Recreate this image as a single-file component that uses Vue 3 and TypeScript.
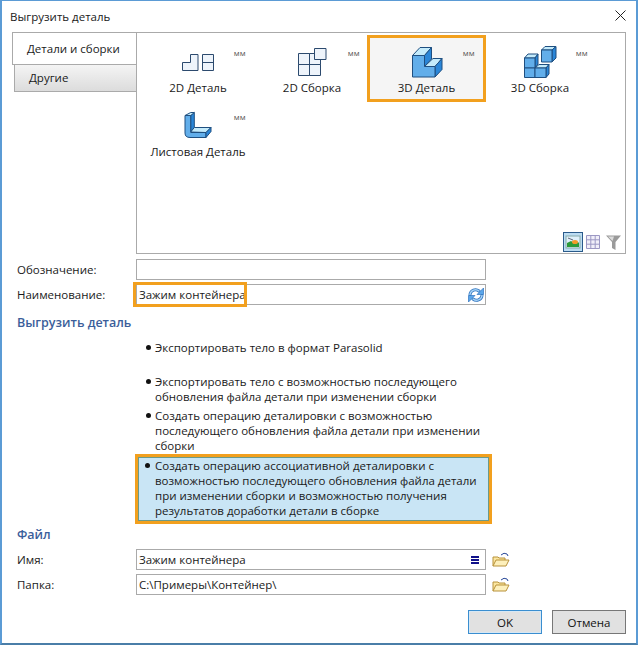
<script setup lang="ts">
interface Item { label: string; icon: string; selected?: boolean }
const items: Item[] = [
  { label: '2D Деталь', icon: 'p2' },
  { label: '2D Сборка', icon: 'a2' },
  { label: '3D Деталь', icon: 'p3', selected: true },
  { label: '3D Сборка', icon: 'a3' },
  { label: 'Листовая Деталь', icon: 'sheet' },
]
const options: { lines: string[]; gap: number; selected?: boolean }[] = [
  { lines: ['Экспортировать тело в формат Parasolid'], gap: 19 },
  { lines: ['Экспортировать тело с возможностью последующего', 'обновления файла детали при изменении сборки'], gap: 4 },
  { lines: ['Создать операцию деталировки с возможностью', 'последующего обновления файла детали при изменении', 'сборки'], gap: 4 },
  { lines: ['Создать операцию ассоциативной деталировки с', 'возможностью последующего обновления файла детали', 'при изменении сборки и возможностью получения', 'результатов доработки детали в сборке'], gap: 0, selected: true },
]
</script>

<template>
  <div class="window">
    <header class="title">
      <span>Выгрузить деталь</span>
      <svg class="close" width="11" height="11" viewBox="0 0 11 11"><path d="M.5.5l10 10M10.500.5l-10 10" stroke="#222" fill="none" /></svg>
    </header>

    <section class="tabs">
      <div class="tab-col">
        <div class="tab active">Детали и сборки</div>
        <div class="tab other">Другие</div>
      </div>
      <div class="pane">
        <div class="grid">
          <div v-for="it in items" :key="it.label" class="item" :class="{ sel: it.selected }">
            <span class="mm">мм</span>
            <svg class="ico" width="40" height="32" viewBox="0 0 40 32">
              <g v-if="it.icon === 'p2'" fill="#eef4fb" stroke="#2c4a6e" stroke-width="1">
                <path d="M4.500 24.500V16.500H12.500V8.500H20V24.500Z" />
                <path d="M24.500 8.500H35.500V24.500H24.500ZM24.500 16.500H35.500" />
              </g>
              <g v-else-if="it.icon === 'a2'" fill="#eef4fb" stroke="#2c4a6e" stroke-width="1">
                <path d="M6.500 7.500h11v11h-11zM6.500 18.500h11v11h-11zM17.500 18.500h11v11h-11zM17.500 7.500h11v11h-11z" />
                <path d="M22.500 2.500h11.500v11h-11.500z" />
              </g>
              <g v-else-if="it.icon === 'p3'" stroke="#1f4f80" stroke-width="1" stroke-linejoin="round">
                <path d="M5.500 9.500L13 1.500H24.500L17.500 9.500Z" fill="#c4ebfb" />
                <path d="M17.500 9.500L24.500 1.500V13L17.500 20.500Z" fill="#2a86d8" />
                <path d="M17.500 20.500L26 12.500H35L28 20.500Z" fill="#c4ebfb" />
                <path d="M28 20.500L35 12.500V23.500L28 31Z" fill="#2a86d8" />
                <path d="M5.500 9.500H17.500V20.500H28V31H5.500Z" fill="#62aeea" />
              </g>
              <g v-else-if="it.icon === 'a3'" stroke="#1f4f80" stroke-width="1" stroke-linejoin="round">
                <path d="M21.500 4L25 .5H36L32 4Z" fill="#c4ebfb" /><path d="M32 4L36 .5V12L32 16Z" fill="#2a86d8" /><path d="M21.500 4H32V16H21.500Z" fill="#62aeea" />
                <path d="M4.500 12L8 8H18L15 12Z" fill="#c4ebfb" /><path d="M15 12L18 8V18L15 22Z" fill="#2a86d8" /><path d="M4.500 12H15V22H4.500Z" fill="#62aeea" />
                <path d="M4.500 22H15V31.500H4.500Z" fill="#62aeea" />
                <path d="M15 22L19 18.500H29L26 22Z" fill="#c4ebfb" /><path d="M26 22L29 18.500V28L26 31.500Z" fill="#2a86d8" /><path d="M15 22H26V31.500H15Z" fill="#62aeea" />
              </g>
              <g v-else stroke="#1f4f80" stroke-width="1" stroke-linejoin="round">
                <path d="M12.700 5.500L16.300 2.500V17.500L12.700 22Z" fill="#2a86d8" />
                <path d="M7 5.500L12.700 2.500H16.300L12.700 5.500Z" fill="#c4ebfb" />
                <path d="M12.700 22L16.300 17.500H33L28 22.500Z" fill="#c4ebfb" />
                <path d="M7 5.500H12.700V22.500H28V27.500H12Q7 27.500 7 23Z" fill="#62aeea" />
                <path d="M28 22.500L33 17.500V21.500L28 27.500Z" fill="#2a86d8" />
              </g>
            </svg>
            <span class="lbl">{{ it.label }}</span>
          </div>
        </div>
        <div class="views">
          <span class="view on">
            <svg width="16" height="14" viewBox="0 0 16 14"><rect x="1" y="1" width="14" height="12" fill="#dff0fa" stroke="#8aa" /><path d="M2 12V8l4-2 3 2 4-1 1 1v4z" fill="#2c9a3a" /><ellipse cx="10" cy="7" rx="3" ry="2" fill="#f39a2a" /><path d="M3 3l5 2" stroke="#667" /></svg>
          </span>
          <svg width="14" height="14" viewBox="0 0 14 14"><path d="M.5.5h13v13H.5zM.5 4.800h13M.5 9.200h13M4.800.5v13M9.200.5v13" fill="#f1eff9" stroke="#9c98c4" /></svg>
          <svg class="funnel" width="15" height="15" viewBox="0 0 15 15"><path d="M0 .5h15L9.500 7v8L6 13V7z" fill="#9a9a9a" /><path d="M2 1.500h6L6.500 6z" fill="#dcdcdc" /></svg>
        </div>
      </div>
    </section>

    <div class="row top">
      <label>Обозначение:</label>
      <div class="field"></div>
    </div>
    <div class="row second">
      <label>Наименование:</label>
      <div class="field">
        <span>Зажим контейнера</span>
        <i class="mark"></i>
        <svg class="sync" width="16" height="16" viewBox="0 0 16 16">
          <g fill="none" stroke-linecap="round">
            <path d="M2 7.500A5.500 5.500 0 0 1 11 4" stroke="#2f74c0" stroke-width="3" />
            <path d="M14 8.500A5.500 5.500 0 0 1 5 12" stroke="#2f74c0" stroke-width="3" />
            <path d="M2 7.500A5.500 5.500 0 0 1 11 4" stroke="#a8d4f6" stroke-width="1.500" />
            <path d="M14 8.500A5.500 5.500 0 0 1 5 12" stroke="#a8d4f6" stroke-width="1.500" />
          </g>
          <path d="M9 7.500H15.500V1Z" fill="#5aa6ea" stroke="#2f74c0" stroke-width=".7" />
          <path d="M7 8.500H.5V15Z" fill="#5aa6ea" stroke="#2f74c0" stroke-width=".7" />
        </svg>
      </div>
    </div>

    <h2 class="h-export">Выгрузить деталь</h2>
    <ul class="opts">
      <li v-for="(o, i) in options" :key="i" :class="{ sel: o.selected }" :style="{ marginBottom: o.gap + 'px' }">
        <span v-for="l in o.lines" :key="l" class="ln">{{ l }}</span>
      </li>
    </ul>

    <h2 class="h-file">Файл</h2>
    <div class="row file first">
      <label>Имя:</label>
      <div class="field">
        <span>Зажим контейнера</span>
        <span class="menu"></span>
      </div>
      <svg class="folder" width="18" height="16" viewBox="0 0 18 16"><path d="M1 14V5h5l1 1h6v2" fill="#fbe6a0" stroke="#b8923a" /><path d="M1 14l3-6h13l-3 6z" fill="#fdf0bc" stroke="#b8923a" /><path d="M9 3q3-3 6-1l1 2" fill="none" stroke="#2a4a9a" /></svg>
    </div>
    <div class="row file">
      <label>Папка:</label>
      <div class="field"><span>C:\Примеры\Контейнер\</span></div>
      <svg class="folder" width="18" height="16" viewBox="0 0 18 16"><path d="M1 14V5h5l1 1h6v2" fill="#fbe6a0" stroke="#b8923a" /><path d="M1 14l3-6h13l-3 6z" fill="#fdf0bc" stroke="#b8923a" /><path d="M9 3q3-3 6-1l1 2" fill="none" stroke="#2a4a9a" /></svg>
    </div>

    <footer class="actions">
      <button class="ok">OK</button>
      <button>Отмена</button>
    </footer>
  </div>
</template>

<style>
html, body { margin: 0; background: #fff; }
</style>

<style scoped>
.window {
  box-sizing: border-box;
  width: 638px;
  height: 645px;
  border: 2px solid #5b9bd5;
  border-bottom-color: #4a7ea8;
  border-top-width: 1px;
  background: #fff;
  font-family: "Open Sans", Roboto, sans-serif;
  font-size: 11.500px;
  color: #1a1a1a;
  overflow: hidden;
}
.title {
  display: flex;
  justify-content: space-between;
  align-items: center;
  height: 30px;
  padding: 0 10px 0 8px;
  margin-bottom: 1px;
}
.close { margin-top: -1px; }
.tabs { display: flex; margin-left: 10px; width: 614px; height: 222px; }
.tab-col { width: 124px; display: flex; flex-direction: column; }
.tab { box-sizing: border-box; padding-left: 14px; }
.active {
  height: 33px;
  line-height: 32px;
  border: 1px solid #aaa;
  border-right: 0;
  border-bottom: 1px solid #aaa;
  position: relative;
}
.other {
  height: 27px;
  line-height: 26px;
  margin-left: 2px;
  padding-left: 14px;
  border: 1px solid #aaa;
  border-top: 0;
  border-right: 0;
  background: linear-gradient(#f4f4f4, #dcdcdc);
}
.pane {
  flex: 1;
  box-sizing: border-box;
  border: 1px solid #aaa;
  position: relative;
  padding: 3px 4px;
}
.grid { display: grid; grid-template-columns: repeat(4, 114px); grid-auto-rows: 64px; }
.item { position: relative; display: flex; flex-direction: column; align-items: center; padding-top: 13px; box-sizing: border-box; }
.item.sel { background: #f5f5f5; outline: 3px solid #f2a01e; width: 113px; height: 61px; align-self: start; margin: 2px 0 0 1px; padding-top: 11px; }
.ico { height: 32px; margin-top: -3px; flex: none; }
.lbl { margin-top: 1px; line-height: 18px; white-space: nowrap; }
.mm { position: absolute; right: 9px; top: 12px; font-size: 8px; color: #555; line-height: 9px; letter-spacing: .3px; }
.item.sel .mm { top: 10px; right: 8px; }
.views { position: absolute; right: 4px; bottom: 1px; display: flex; align-items: center; gap: 3px; }
.view { box-sizing: border-box; width: 20px; height: 20px; border: 1px solid #2a5a8a; background: #bcdcf2; display: flex; align-items: center; justify-content: center; }
.funnel { margin-left: 3px; }
.row { display: flex; align-items: center; margin-left: 15px; }
.row label { width: 119px; flex: none; }
.top { margin-top: 5px; }
.second { margin-top: 4px; }
.field {
  box-sizing: border-box;
  width: 350px;
  height: 21px;
  border: 1px solid #aaa;
  position: relative;
  display: flex;
  align-items: center;
  padding-left: 2px;
  line-height: 18px;
}
.mark { position: absolute; left: -4px; top: -3px; width: 108px; height: 19px; border: 3px solid #f2a01e; pointer-events: none; }
.sync { position: absolute; right: 1px; top: 2px; }
.menu { position: absolute; right: 6px; top: 6px; width: 8px; height: 2px; background: #11118a; box-shadow: 0 3px #11118a, 0 6px #11118a; }
h2 { margin: 0 0 0 15px; font-size: 12.500px; font-weight: 600; color: #3b5e9a; line-height: 18px; }
.h-export { margin-top: 9px; }
.opts { list-style: none; margin: 8px 0 0; padding: 0; position: relative; }
.opts li { box-sizing: border-box; margin-left: 134px; width: 354px; padding-left: 19px; position: relative; line-height: 15px; }
.opts li::before { content: ""; position: absolute; left: 10px; top: 5px; width: 5px; height: 5px; border-radius: 50%; background: #111; }
.ln { display: block; white-space: nowrap; }
.opts li.sel { background: #c9e5f5; border: 1px solid #6a9a8a; outline: 3px solid #f2a01e; padding: 0 0 2px 16px; margin-left: 136px; width: 351px; }
.opts li.sel::before { left: 6px; top: 5px; }
.h-file { margin-top: 5px; }
.file { height: 21px; margin-top: 4px; }
.file.first { margin-top: 5px; }
.folder { margin-left: 6px; }
.actions { display: flex; justify-content: flex-end; gap: 10px; padding-right: 10px; margin-top: 15px; }
button {
  width: 74px;
  height: 24px;
  border: 1px solid #777;
  background: #e1e1e1;
  font: inherit;
  color: #111;
  padding: 0;
}
.ok { border-color: #3a8ed0; box-shadow: inset 0 0 0 1px #d8e8f4; }
</style>
